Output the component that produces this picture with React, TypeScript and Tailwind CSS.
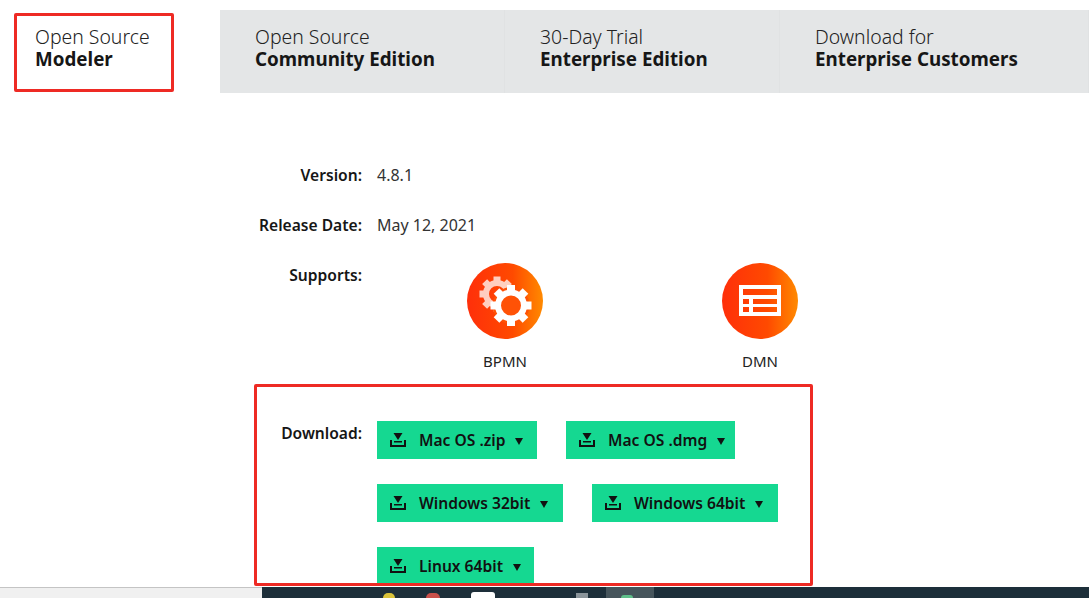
const font = "font-['Noto_Sans','Open_Sans',sans-serif]";

function DownloadIcon() {
  return (
    <svg width="16" height="14" viewBox="0 0 16 14" className="shrink-0">
      <path d="M3.5 0h9L8 7z" fill="#111" />
      <path d="M4 8h8v1.5H4z" fill="#111" />
      <path d="M1 7v6h14V7" fill="none" stroke="#111" strokeWidth="2" />
    </svg>
  );
}

function DownloadButton({ label, width }: { label: string; width: string }) {
  return (
    <div className={`flex h-[38px] items-center whitespace-nowrap bg-[#15d891] pl-[13px] ${width}`}>
      <DownloadIcon />
      <span className="ml-[13px] mt-[2px] text-[15.6px] font-semibold text-[#111]">{label}</span>
      <span className="ml-[10px] mt-[3px] h-0 w-0 border-x-[4.5px] border-t-[7px] border-x-transparent border-t-[#111]" />
    </div>
  );
}

function Tab({ top, bottom, width }: { top: string; bottom: string; width: string }) {
  return (
    <div className={`h-[83px] whitespace-nowrap border-r border-[#e0e2e3] pl-[35px] pt-[16px] ${width}`}>
      <div className="text-[19.4px] leading-[22px] font-light text-[#222]">{top}</div>
      <div className="text-[18.8px] leading-[22px] font-bold text-[#161616]">{bottom}</div>
    </div>
  );
}

function GearIcon() {
  const teeth = [0, 45, 90, 135, 180, 225, 270, 315];
  return (
    <svg width="76" height="76" viewBox="0 0 76 76">
      <defs>
        <linearGradient id="orangeA" x1="0" y1="0" x2="1" y2="0">
          <stop offset="0" stopColor="#ff2f0a" />
          <stop offset="0.6" stopColor="#ff4a00" />
          <stop offset="1" stopColor="#ff8a00" />
        </linearGradient>
      </defs>
      <circle cx="38" cy="38" r="38" fill="url(#orangeA)" />
      <g opacity="0.75">
        {teeth.map((a) => (
          <rect key={a} x="26.5" y="13.5" width="7" height="6" fill="#fff" transform={`rotate(${a} 30 31)`} />
        ))}
        <circle cx="30" cy="31" r="11" fill="none" stroke="#fff" strokeWidth="6" />
      </g>
      <circle cx="44" cy="42.5" r="18.5" fill="#ff5206" />
      {teeth.map((a) => (
        <rect key={a} x="40" y="22" width="8" height="7" fill="#fff" transform={`rotate(${a} 44 42.5)`} />
      ))}
      <circle cx="44" cy="42.5" r="13" fill="none" stroke="#fff" strokeWidth="6" />
    </svg>
  );
}

function TableIcon() {
  return (
    <svg width="76" height="76" viewBox="0 0 76 76">
      <defs>
        <linearGradient id="orangeB" x1="0" y1="0" x2="1" y2="0">
          <stop offset="0" stopColor="#ff2f0a" />
          <stop offset="0.6" stopColor="#ff4a00" />
          <stop offset="1" stopColor="#ff8a00" />
        </linearGradient>
      </defs>
      <circle cx="38" cy="38" r="38" fill="url(#orangeB)" />
      <path
        d="M17 22h42v31H17z M21 26v6h34v-6z M21 36v5h6v-5z M31 36v5h24v-5z M21 44v5h6v-5z M31 44v5h24v-5z"
        fill="#fff"
        fillRule="evenodd"
      />
    </svg>
  );
}

function InfoRow({ label, value }: { label: string; value: string }) {
  return (
    <div className="mb-[30px] flex items-start">
      <div className="w-[362px] text-right text-[15.6px] leading-5 font-semibold text-[#161616]">{label}</div>
      <div className="ml-[15px] text-[16px] leading-5 text-[#333]">{value}</div>
    </div>
  );
}

export default function App() {
  return (
    <div className={`relative flex h-[598px] w-[1089px] flex-col overflow-hidden bg-white ${font}`}>
      <div className="flex items-start pt-[10px]">
        <div className="h-[83px] w-[220px] pl-[35px] pt-[16px]">
          <div className="text-[19.4px] leading-[22px] font-light text-[#222]">Open Source</div>
          <div className="text-[18.8px] leading-[22px] font-bold text-[#161616]">Modeler</div>
        </div>
        <div className="flex flex-1 bg-[#e4e6e7]">
          <Tab top="Open Source" bottom="Community Edition" width="w-[285px]" />
          <Tab top="30-Day Trial" bottom="Enterprise Edition" width="w-[275px]" />
          <Tab top="Download for" bottom="Enterprise Customers" width="flex-1" />
        </div>
      </div>

      <div className="flex flex-1 flex-col pt-[72px]">
        <InfoRow label="Version:" value="4.8.1" />
        <InfoRow label="Release Date:" value="May 12, 2021" />
        <div className="flex items-start">
          <div className="w-[362px] text-right text-[15.6px] leading-5 font-semibold text-[#161616]">Supports:</div>
          <div className="ml-[105px] -mt-[2px] flex w-[331px] justify-between">
            <div className="flex w-[76px] flex-col items-center">
              <GearIcon />
              <div className="mt-[12px] text-[15px] leading-5 text-[#222]">BPMN</div>
            </div>
            <div className="flex w-[76px] flex-col items-center">
              <TableIcon />
              <div className="mt-[12px] text-[15px] leading-5 text-[#222]">DMN</div>
            </div>
          </div>
        </div>
        <div className="mt-[50px] flex items-start">
          <div className="w-[362px] pt-[2px] text-right text-[15.6px] leading-5 font-semibold text-[#161616]">Download:</div>
          <div className="ml-[15px] flex flex-col gap-[25px]">
            <div className="flex gap-[29px]">
              <DownloadButton label="Mac OS .zip" width="w-[160px]" />
              <DownloadButton label="Mac OS .dmg" width="w-[169px]" />
            </div>
            <div className="flex gap-[29px]">
              <DownloadButton label="Windows 32bit" width="w-[186px]" />
              <DownloadButton label="Windows 64bit" width="w-[186px]" />
            </div>
            <div className="flex">
              <DownloadButton label="Linux 64bit" width="w-[157px]" />
            </div>
          </div>
        </div>
      </div>

      <div className="absolute left-0 right-0 bottom-0 flex h-[11px] border-t border-[#c4c4c4] bg-[#f0f0f0]">
        <div className="w-[262px]" />
        <div className="relative -mt-px flex-1 bg-[#1d2f3a]">
          {/* tops of the taskbar icons, cut off by the screenshot */}
          <div className="absolute left-[121px] top-[6px] h-[5px] w-[12px] rounded-t-full bg-[#d9c23a]" />
          <div className="absolute left-[164px] top-[6px] h-[5px] w-[14px] rounded-t-full bg-[#c9504a]" />
          <div className="absolute left-[209px] top-[5px] h-[6px] w-[24px] rounded-t-[3px] bg-white" />
          <div className="absolute left-[314px] top-[6px] h-[5px] w-[12px] bg-[#8a949a]" />
          <div className="absolute left-[344px] top-0 h-[11px] w-[48px] bg-[#46555c]" />
          <div className="absolute left-[359px] top-[8px] h-[3px] w-[12px] rounded-t-full bg-[#5fbf8a]" />
        </div>
      </div>

      {/* red annotation boxes drawn over the screenshot */}
      <div className="absolute left-[14px] top-[13px] h-[79px] w-[160px] rounded-[2px] border-[3px] border-[#ee2a24]" />
      <div className="absolute left-[254px] top-[384px] h-[202px] w-[559px] rounded-[2px] border-[3px] border-[#ee2a24]" />
    </div>
  );
}
